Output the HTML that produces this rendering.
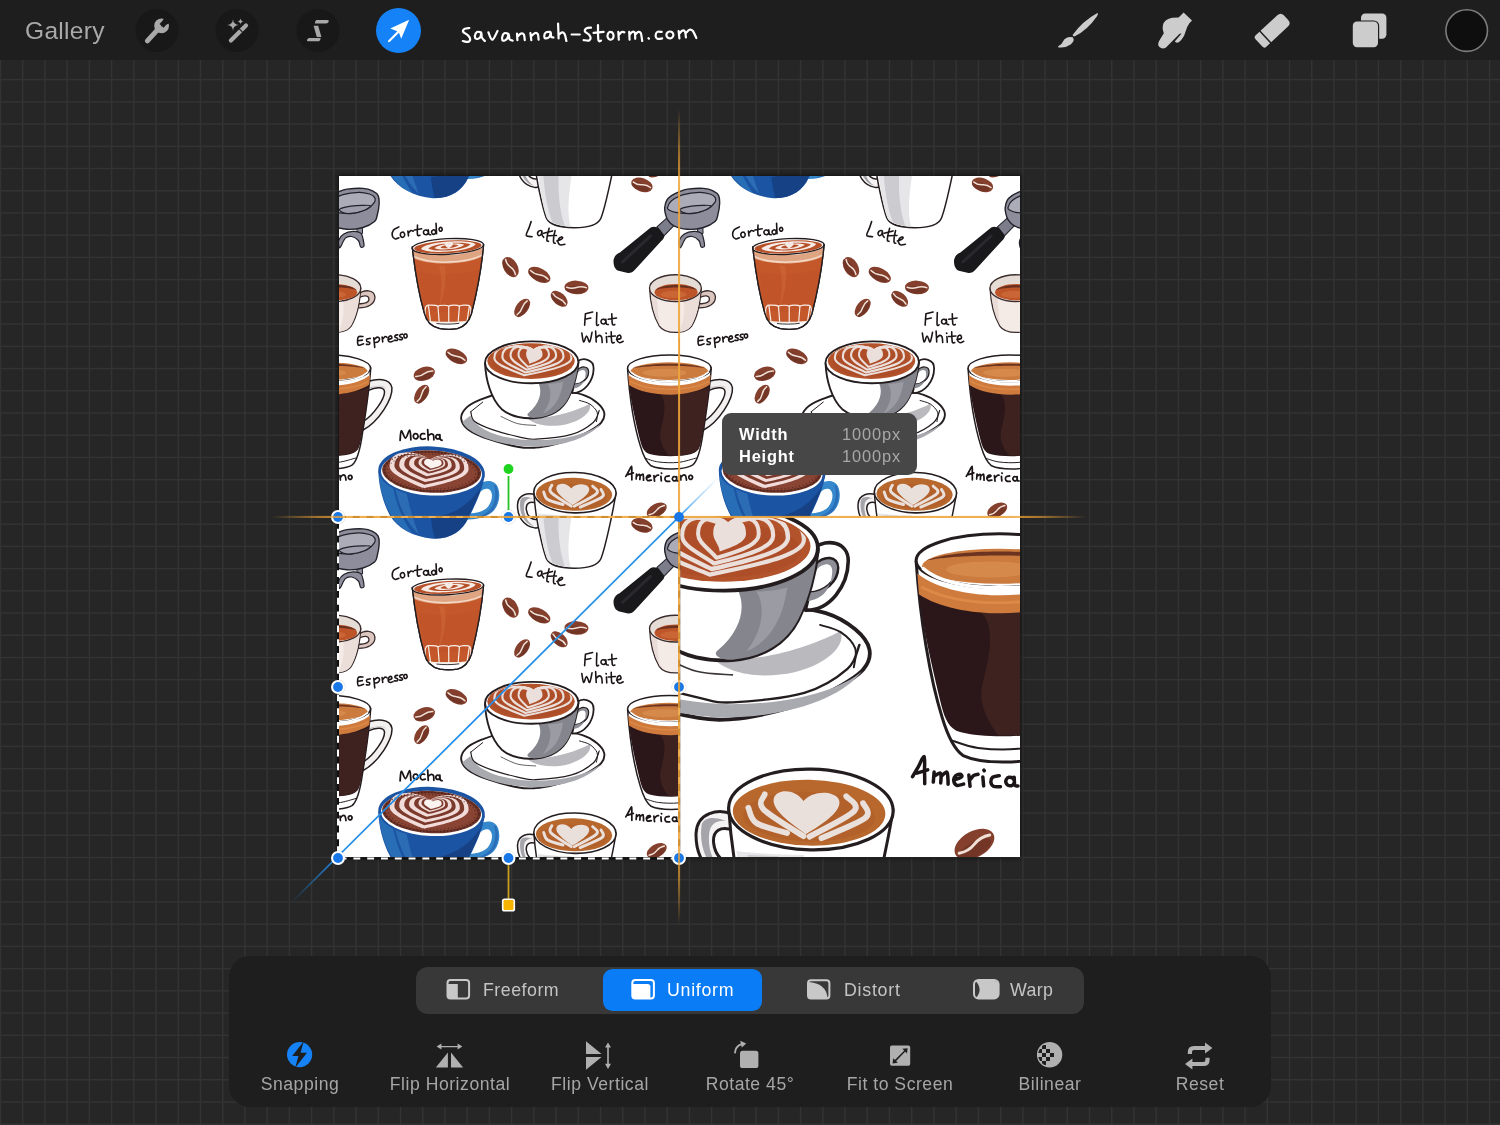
<!DOCTYPE html>
<html><head><meta charset="utf-8"><title>Procreate - Transform</title>
<style>
*{box-sizing:border-box;margin:0;padding:0}
html,body{width:1500px;height:1125px;overflow:hidden;background:#262626;font-family:"Liberation Sans",sans-serif}
#root{position:relative;width:1500px;height:1125px;overflow:hidden;background:#262626}
#grid,#stage{position:absolute;left:0;top:0;width:1500px;height:1125px}
#topbar{position:absolute;left:0;top:0;width:1500px;height:60px;background:#1e1e1e}
#topbar .gal{will-change:transform;position:absolute;left:25.3px;top:16px;font-size:24.5px;line-height:30px;color:#a9a9a9;letter-spacing:0.32px}
#topbar svg{position:absolute;left:0;top:0}
#panel{position:absolute;left:229px;top:956px;width:1042px;height:151px;border-radius:21px;background:#1e1e1e}
#seg{position:absolute;left:187px;top:11px;width:668px;height:47px;border-radius:12px;background:#383838}
#seg .on{position:absolute;left:187px;top:2.4px;width:159px;height:41.5px;border-radius:9.5px;background:#0a7cf6}
#seg span{will-change:transform;position:absolute;top:11px;font-size:17.8px;line-height:24px;color:#c4c4c4;letter-spacing:0.35px;white-space:nowrap}
#seg span.w{color:#fff}
.lbl{will-change:transform;position:absolute;top:116px;width:150px;text-align:center;font-size:17.6px;line-height:24px;color:#a6a6a6;letter-spacing:0.53px;white-space:nowrap}
#picons{position:absolute;left:-229px;top:-956px}
#tip{position:absolute;left:722px;top:413px;width:195px;height:62px;border-radius:9px;background:#474747}
#tip b,#tip i{will-change:transform;position:absolute;font-size:16.4px;line-height:20px;font-style:normal;white-space:nowrap}
#tip b{left:17px;color:#fff;letter-spacing:0.8px}
#tip i{right:16.2px;color:#a8a8a8;letter-spacing:0.9px}
</style></head><body><div id="root">
<svg id="grid" width="1500" height="1125" viewBox="0 0 1500 1125"><g fill="#333333"><rect x="-0.28" y="60" width="1.5" height="1065"/><rect x="21.95" y="60" width="1.5" height="1065"/><rect x="44.17" y="60" width="1.5" height="1065"/><rect x="66.40" y="60" width="1.5" height="1065"/><rect x="88.62" y="60" width="1.5" height="1065"/><rect x="110.84" y="60" width="1.5" height="1065"/><rect x="133.07" y="60" width="1.5" height="1065"/><rect x="155.29" y="60" width="1.5" height="1065"/><rect x="177.52" y="60" width="1.5" height="1065"/><rect x="199.74" y="60" width="1.5" height="1065"/><rect x="221.97" y="60" width="1.5" height="1065"/><rect x="244.19" y="60" width="1.5" height="1065"/><rect x="266.42" y="60" width="1.5" height="1065"/><rect x="288.64" y="60" width="1.5" height="1065"/><rect x="310.87" y="60" width="1.5" height="1065"/><rect x="333.10" y="60" width="1.5" height="1065"/><rect x="355.32" y="60" width="1.5" height="1065"/><rect x="377.55" y="60" width="1.5" height="1065"/><rect x="399.77" y="60" width="1.5" height="1065"/><rect x="422.00" y="60" width="1.5" height="1065"/><rect x="444.22" y="60" width="1.5" height="1065"/><rect x="466.45" y="60" width="1.5" height="1065"/><rect x="488.67" y="60" width="1.5" height="1065"/><rect x="510.90" y="60" width="1.5" height="1065"/><rect x="533.12" y="60" width="1.5" height="1065"/><rect x="555.35" y="60" width="1.5" height="1065"/><rect x="577.57" y="60" width="1.5" height="1065"/><rect x="599.80" y="60" width="1.5" height="1065"/><rect x="622.02" y="60" width="1.5" height="1065"/><rect x="644.25" y="60" width="1.5" height="1065"/><rect x="666.47" y="60" width="1.5" height="1065"/><rect x="688.70" y="60" width="1.5" height="1065"/><rect x="710.92" y="60" width="1.5" height="1065"/><rect x="733.15" y="60" width="1.5" height="1065"/><rect x="755.37" y="60" width="1.5" height="1065"/><rect x="777.60" y="60" width="1.5" height="1065"/><rect x="799.82" y="60" width="1.5" height="1065"/><rect x="822.05" y="60" width="1.5" height="1065"/><rect x="844.27" y="60" width="1.5" height="1065"/><rect x="866.50" y="60" width="1.5" height="1065"/><rect x="888.72" y="60" width="1.5" height="1065"/><rect x="910.95" y="60" width="1.5" height="1065"/><rect x="933.17" y="60" width="1.5" height="1065"/><rect x="955.40" y="60" width="1.5" height="1065"/><rect x="977.62" y="60" width="1.5" height="1065"/><rect x="999.85" y="60" width="1.5" height="1065"/><rect x="1022.07" y="60" width="1.5" height="1065"/><rect x="1044.30" y="60" width="1.5" height="1065"/><rect x="1066.52" y="60" width="1.5" height="1065"/><rect x="1088.75" y="60" width="1.5" height="1065"/><rect x="1110.97" y="60" width="1.5" height="1065"/><rect x="1133.20" y="60" width="1.5" height="1065"/><rect x="1155.42" y="60" width="1.5" height="1065"/><rect x="1177.65" y="60" width="1.5" height="1065"/><rect x="1199.87" y="60" width="1.5" height="1065"/><rect x="1222.10" y="60" width="1.5" height="1065"/><rect x="1244.32" y="60" width="1.5" height="1065"/><rect x="1266.54" y="60" width="1.5" height="1065"/><rect x="1288.77" y="60" width="1.5" height="1065"/><rect x="1310.99" y="60" width="1.5" height="1065"/><rect x="1333.22" y="60" width="1.5" height="1065"/><rect x="1355.44" y="60" width="1.5" height="1065"/><rect x="1377.67" y="60" width="1.5" height="1065"/><rect x="1399.89" y="60" width="1.5" height="1065"/><rect x="1422.12" y="60" width="1.5" height="1065"/><rect x="1444.34" y="60" width="1.5" height="1065"/><rect x="1466.57" y="60" width="1.5" height="1065"/><rect x="1488.79" y="60" width="1.5" height="1065"/><rect x="0" y="78.88" width="1500" height="1.5"/><rect x="0" y="101.10" width="1500" height="1.5"/><rect x="0" y="123.32" width="1500" height="1.5"/><rect x="0" y="145.55" width="1500" height="1.5"/><rect x="0" y="167.77" width="1500" height="1.5"/><rect x="0" y="190.00" width="1500" height="1.5"/><rect x="0" y="212.22" width="1500" height="1.5"/><rect x="0" y="234.45" width="1500" height="1.5"/><rect x="0" y="256.67" width="1500" height="1.5"/><rect x="0" y="278.90" width="1500" height="1.5"/><rect x="0" y="301.12" width="1500" height="1.5"/><rect x="0" y="323.35" width="1500" height="1.5"/><rect x="0" y="345.58" width="1500" height="1.5"/><rect x="0" y="367.80" width="1500" height="1.5"/><rect x="0" y="390.03" width="1500" height="1.5"/><rect x="0" y="412.25" width="1500" height="1.5"/><rect x="0" y="434.48" width="1500" height="1.5"/><rect x="0" y="456.70" width="1500" height="1.5"/><rect x="0" y="478.93" width="1500" height="1.5"/><rect x="0" y="501.15" width="1500" height="1.5"/><rect x="0" y="523.38" width="1500" height="1.5"/><rect x="0" y="545.60" width="1500" height="1.5"/><rect x="0" y="567.83" width="1500" height="1.5"/><rect x="0" y="590.05" width="1500" height="1.5"/><rect x="0" y="612.28" width="1500" height="1.5"/><rect x="0" y="634.50" width="1500" height="1.5"/><rect x="0" y="656.73" width="1500" height="1.5"/><rect x="0" y="678.95" width="1500" height="1.5"/><rect x="0" y="701.18" width="1500" height="1.5"/><rect x="0" y="723.40" width="1500" height="1.5"/><rect x="0" y="745.63" width="1500" height="1.5"/><rect x="0" y="767.85" width="1500" height="1.5"/><rect x="0" y="790.08" width="1500" height="1.5"/><rect x="0" y="812.30" width="1500" height="1.5"/><rect x="0" y="834.53" width="1500" height="1.5"/><rect x="0" y="856.75" width="1500" height="1.5"/><rect x="0" y="878.98" width="1500" height="1.5"/><rect x="0" y="901.20" width="1500" height="1.5"/><rect x="0" y="923.43" width="1500" height="1.5"/><rect x="0" y="945.65" width="1500" height="1.5"/><rect x="0" y="967.88" width="1500" height="1.5"/><rect x="0" y="990.10" width="1500" height="1.5"/><rect x="0" y="1012.33" width="1500" height="1.5"/><rect x="0" y="1034.55" width="1500" height="1.5"/><rect x="0" y="1056.78" width="1500" height="1.5"/><rect x="0" y="1079.00" width="1500" height="1.5"/><rect x="0" y="1101.23" width="1500" height="1.5"/><rect x="0" y="1123.45" width="1500" height="1.5"/></g></svg><svg id="stage" width="1500" height="1125" viewBox="0 0 1500 1125">
<defs><g id="art"><path d="M122.4 243.2 C122.0 239.6 124.0 235.6 127.2 232.4 C130.4 229.2 135.3 226.6 141.6 224.0 C147.9 221.4 156.4 218.6 165.0 217.0 C173.6 215.4 183.5 214.8 193.0 214.5 C202.5 214.2 213.5 214.8 222.0 215.5 C230.5 216.2 237.7 217.0 243.8 218.9 C249.9 220.8 254.9 224.0 258.5 227.0 C262.1 230.0 264.9 233.7 265.6 237.0 C266.3 240.3 265.2 243.8 262.6 247.0 C260.0 250.2 254.9 253.2 250.0 256.0 C245.1 258.8 238.8 261.4 233.0 263.6 C227.2 265.8 221.0 267.6 215.0 269.0 C209.0 270.4 202.8 271.6 197.0 272.0 C191.2 272.4 187.8 272.8 180.0 271.4 C172.2 270.0 158.4 266.5 150.0 263.6 C141.6 260.7 134.2 257.4 129.6 254.0 C125.0 250.6 122.8 246.8 122.4 243.2Z" fill="#fff" stroke="#241d20" stroke-width="1.9" stroke-linecap="round" stroke-linejoin="round"/><path d="M123.5 246 C128 258 160 270 193 271.2 C226 271 252 261 262 248 C250 258 226 264.5 196 264.5 C164 264 138 255 131.5 240 Z" fill="#a9a9b0"/><path d="M132.0 236.0 C132.6 237.6 132.0 242.6 135.6 245.6 C139.2 248.6 146.2 251.4 153.6 254.0 C161.0 256.6 172.8 259.6 180.0 261.2 C187.2 262.8 188.2 264.0 197.0 263.6 C205.8 263.2 223.4 261.6 233.0 258.8 C242.6 256.0 250.0 250.8 254.6 246.8 C259.2 242.8 259.6 236.8 260.6 234.8" fill="none" stroke="#241d20" stroke-width="1.2" stroke-linecap="round" stroke-linejoin="round"/><path d="M144.0 226.4 L132.0 236.0" fill="none" stroke="#241d20" stroke-width="1.0" stroke-linecap="round" stroke-linejoin="round"/><path d="M186 240 C205 246 236 236 251 228 C254 234 246 244 228 248.5 C212 252 194 250 186 240Z" fill="#b9b9be"/><path d="M240.9 224.8 C242.6 225.4 248.3 226.5 251.2 228.4 C254.1 230.3 257.4 233.6 258.5 236.5 C259.6 239.4 257.9 244.4 257.8 246.0" fill="none" stroke="#241d20" stroke-width="1.0" stroke-linecap="round" stroke-linejoin="round"/><path d="M162.2 240.8 C165.0 242.0 173.2 246.5 179.0 248.0 C184.8 249.5 194.0 249.5 197.0 249.8" fill="none" stroke="#3a3538" stroke-width="0.8" stroke-linecap="round" stroke-linejoin="round"/><path d="M238.5 186 C243.8 181.5 255.3 183 255 193 C254.8 205 246 217.8 233.5 217.4 L235.5 208.8 C243 208.6 249.7 203 249.7 196.2 C249.7 190.5 243 190 238.6 195 Z" fill="#fff" stroke="#241d20" stroke-width="1.8" stroke-linecap="round" stroke-linejoin="round"/><path d="M238.8 195 C243 190.4 249.5 191 249.4 196.2 C249 203 243 208.4 235.7 208.6 L234.6 212.8 C242 212 246.5 207 247 198 C247 193 242 193.5 238.8 197.5Z" fill="#8d8e96"/><path d="M146.3 188 C147 204 152 223 163 233.5 C172 241 185 243.2 197 242.4 C212 241.2 224 234 230 222 C235.5 211 238.5 199 239.8 187 Z" fill="#fff" stroke="#241d20" stroke-width="1.9" stroke-linecap="round" stroke-linejoin="round"/><path d="M199.8 207.5 C204 216 201 228 190 237.2 C186 240 192 242.6 197 242.2 C212 241 224 234 230 222 C235.5 211 238.3 199 239.4 189 C232 200 216 206 199.8 207.5Z" fill="#84858d"/><path d="M209 208 C214 216 212 228 204 238 C214 234 222 224 224.5 206 C219 207.5 214 208 209 208Z" fill="#9a9ba3"/><ellipse cx="193.0" cy="186.6" rx="46.8" ry="21.0" fill="#fff" stroke="#241d20" stroke-width="1.9" transform="rotate(-0.5 193.0 186.6)"/><ellipse cx="192.3" cy="185.4" rx="43.8" ry="17.8" fill="#b3532b"/><ellipse cx="192.3" cy="187.4" rx="39.0" ry="13.6" fill="#a84a25" opacity=".45"/><clipPath id="fwc"><ellipse cx="192.3" cy="185.4" rx="43" ry="17.2"/></clipPath><g clip-path="url(#fwc)"><path d="M185.6 199.6 C170.3 193.2 155.6 188.6 155.6 182.2 C155.6 171.8 167.2 170.3 174.9 170.6 C184.5 171.2 191.9 173.5 194.2 176.4 C196.5 173.5 203.8 171.2 213.5 170.6 C221.2 170.3 232.8 171.8 232.8 182.2 C232.8 188.6 218.1 193.2 185.6 199.6Z" fill="none" stroke="#ebdfdb" stroke-width="2.1" stroke-linecap="round" stroke-linejoin="round"/><path d="M186.6 196.8 C175.2 191.0 163.6 186.8 163.6 181.0 C163.6 171.5 172.8 170.1 178.9 170.4 C186.5 170.9 192.4 173.0 194.2 175.7 C196.0 173.0 201.8 170.9 209.5 170.4 C215.6 170.1 224.8 171.5 224.8 181.0 C224.8 186.8 213.2 191.0 186.6 196.8Z" fill="none" stroke="#ebdfdb" stroke-width="2.2" stroke-linecap="round" stroke-linejoin="round"/><path d="M187.8 194.0 C180.5 188.9 171.8 185.2 171.8 180.1 C171.8 171.7 178.6 170.6 183.2 170.8 C188.9 171.3 193.2 173.1 194.6 175.4 C196.0 173.1 200.3 171.3 206.0 170.8 C210.6 170.6 217.4 171.7 217.4 180.1 C217.4 185.2 208.7 188.9 187.8 194.0Z" fill="none" stroke="#ebdfdb" stroke-width="2.1" stroke-linecap="round" stroke-linejoin="round"/><path d="M189.0 191.2 C185.6 186.8 179.8 183.7 179.8 179.3 C179.8 172.2 184.4 171.2 187.4 171.4 C191.2 171.8 194.1 173.4 195.0 175.4 C195.9 173.4 198.8 171.8 202.6 171.4 C205.6 171.2 210.2 172.2 210.2 179.3 C210.2 183.7 204.4 186.8 189.0 191.2Z" fill="none" stroke="#ebdfdb" stroke-width="2.0" stroke-linecap="round" stroke-linejoin="round"/><path d="M190.6 188.0 C190.5 184.7 187.4 182.3 187.4 179.0 C187.4 173.6 189.9 172.8 191.5 173.0 C193.5 173.3 195.1 174.5 195.6 176.0 C196.1 174.5 197.7 173.3 199.7 173.0 C201.3 172.8 203.8 173.6 203.8 179.0 C203.8 182.3 200.7 184.7 190.6 188.0Z" fill="#ebdfdb"/></g><path d="M370.6 205.6 C378 203.4 392 201.6 394 212 C395 223 381 246 364.8 254.6 L365.8 245.4 C376 239 386.6 223 386.6 216.2 C386.4 209.6 376 212.4 370 215 Z" fill="#f3f0f0" stroke="#241d20" stroke-width="1.5" stroke-linecap="round" stroke-linejoin="round"/><path d="M372 213 C378 210 387.5 208.8 388.6 215 C388 208 378 209.5 371 212.2Z" fill="#b9b4b6"/><path d="M289 193 C291 222 296 252 302 271 C305 281 308 287 312.5 290.2 C322 294.6 345 294.6 354 289.6 C358.6 286 362 276 364.6 257 C368 236 371.4 212 372.8 192 Z" fill="#fff" stroke="#241d20" stroke-width="1.5" stroke-linecap="round" stroke-linejoin="round"/><path d="M290.2 208 C300 216 320 218.4 334 218 C350 217.6 364 214 371.4 207.6 C370 226 366 250 362.6 266 C361 274 358 277.4 352 278.6 C340 281.4 322 281.2 311 278.4 C305.6 277 303.4 272 301.6 265 C297 246 292.4 226 290.2 208Z" fill="#2b1719"/><path d="M318 216 C330 222 326 240 322 255 C320 266 326 274 330 280 C344 280.6 356 278 360 274 C364 262 368 236 370.6 212 C356 218 336 219 318 216Z" fill="#3d2220"/><path d="M289.6 199 C300 207.4 318 210 332 210 C350 209.6 364 206 372.2 199 L371.4 208.8 C362 215.6 346 218.8 332 219 C316 219 300 216 290.4 209.4Z" fill="#cf7b3e"/><path d="M292 206 C304 212 320 214 334 213.6 C350 213 362 210.4 370 206" fill="none" stroke="#dd8a48" stroke-width="1.4" stroke-linecap="round" stroke-linejoin="round"/><ellipse cx="330.8" cy="192.6" rx="41.8" ry="13.4" fill="#fff" stroke="#241d20" stroke-width="1.5"/><ellipse cx="330.8" cy="195.4" rx="38.8" ry="8.8" fill="#cb7b3e"/><path d="M294 192.6 C308 186.6 352 186.4 367.6 192.6 C352 189.2 310 189.2 294 192.6Z" fill="#6b3320"/><ellipse cx="326.0" cy="197.0" rx="22.0" ry="4.0" fill="#dc9456" opacity=".6"/><path d="M292.6 196.6 C302 205 322 206.4 333 206.2 C348 206 362 203.4 369.6 196.6" fill="none" stroke="#fff" stroke-width="1.7" stroke-linecap="round" stroke-linejoin="round"/><path d="M306.6 282.6 C308.8 283.2 314.4 285.7 320.0 286.4 C325.6 287.1 333.7 287.5 340.0 286.8 C346.3 286.1 355.0 283.1 358.0 282.4" fill="none" stroke="#241d20" stroke-width="1.0" stroke-linecap="round" stroke-linejoin="round"/><path d="M197 319.6 C190 316.6 179.4 318.6 178.8 329 C178.4 340 184 350.6 196 352.4 C199.6 352.8 201.6 351 202 348.6 L199.6 343.6 C193.6 345.6 188.4 341 187.6 334 C187 327.6 191 325.4 197.6 327.6Z" fill="#f4f2f2" stroke="#241d20" stroke-width="1.5" stroke-linecap="round" stroke-linejoin="round"/><path d="M181.6 325 C180 336 184.6 348 195 350.6 C187.4 346 184.4 337 185.4 329 C186 324 190 322.4 194 323 C188 320.6 182.6 320.8 181.6 325Z" fill="#a4a4aa"/><path d="M195.2 317 C196 330 198 345 201 358 C203.4 369 205.4 377 207.6 383 C210.6 389.6 222 392.8 235.4 392.8 C248.6 392.8 259.6 389.6 262.4 383 C266 374 269.4 358 272.4 344 C274.6 333 276.6 324 277.4 317 Z" fill="#fff" stroke="#241d20" stroke-width="1.5" stroke-linecap="round" stroke-linejoin="round"/><path d="M199 338 C202 360 205 376 209 384.6 C214 389.6 224 391.6 232 391.6 C228 378 230 360 233 340 C221 340 208 339 199 338Z" fill="#e6e6e8"/><path d="M204.6 340 C206 360 209.6 378 214 387.6 C218 389.6 223 390.6 226 390.8 C221 376 219 356 220 340.6Z" fill="#cbcbd0"/><ellipse cx="236.3" cy="317.2" rx="41.2" ry="20.2" fill="#fff" stroke="#241d20" stroke-width="1.6" transform="rotate(1.2 236.3 317.2)"/><ellipse cx="235.4" cy="318.8" rx="38.2" ry="16.5" fill="#b8672d" transform="rotate(1.2 235.4 318.8)"/><ellipse cx="235.4" cy="320.8" rx="33.0" ry="12.4" fill="#ad5c27" transform="rotate(1.2 235.4 320.8)" opacity=".5"/><path d="M233.8 329.6 C226 324 216 317 217.8 311.4 C219.6 306.6 228.6 307 232.6 313 C236.6 308 246.6 307.4 250 311.6 C253.4 317.4 242 324.6 233.8 329.6Z" fill="#e9dfdb"/><path d="M213.2 309.6 C213.1 310.8 209.2 313.5 212.4 317.0 C215.6 320.5 229.2 328.3 232.6 330.6" fill="none" stroke="#e9dfdb" stroke-width="2.9" stroke-linecap="round" stroke-linejoin="round"/><path d="M205.0 316.4 C205.7 317.7 205.8 321.9 209.0 324.0 C212.2 326.1 221.8 328.2 224.4 329.0" fill="none" stroke="#e9dfdb" stroke-width="2.9" stroke-linecap="round" stroke-linejoin="round"/><path d="M254.0 310.6 C254.7 311.8 261.1 314.6 258.0 318.0 C254.9 321.4 239.3 328.7 235.6 330.8" fill="none" stroke="#e9dfdb" stroke-width="2.9" stroke-linecap="round" stroke-linejoin="round"/><path d="M262.4 314.0 C262.6 315.2 267.1 318.5 263.6 321.4 C260.1 324.3 245.3 329.9 241.6 331.6" fill="none" stroke="#e9dfdb" stroke-width="2.9" stroke-linecap="round" stroke-linejoin="round"/><path d="M141 308.6 C146 304.6 155 303.8 158.8 311 C162.4 319 160.4 331 153 337 C146 342.6 134 345 124 343.6 L127 337.6 C136 338.6 145.4 336 149.4 331 C153.6 325.6 154.4 318 151.4 314.6 C148.6 312 144.6 313.4 141.6 316.4Z" fill="#3688cc"/><path d="M157 309.6 C161 318 159.6 330 152.4 336.6 C148 340.6 140 343 132 343.4 C142 341.6 150.6 337 154 330 C157 323 157.6 315 155 310Z" fill="#2a6db8"/><path d="M39.4 295 C39.6 310 44 327 51 340 C58 352 74 361.6 94 363.2 C112 364 124 355 129.4 343 C137 329 143.6 314 146 300 Z" fill="#1b54a2"/><path d="M40 300 C41 314 46 330 53 341 C58 349 66 355 74 358.4 C64 346 56 326 53 306Z" fill="#3688cc" opacity=".5"/><path d="M56 312 C60 330 68 348 80 359 C74 344 69 326 67 314Z" fill="#4a9bd8" opacity=".35"/><path d="M96 363 C112 363 123 355 128.6 343.4 C134 333 139 322 142.6 311 C130 330 114 340 92 342 C93 350 94 357 96 363Z" fill="#153c7e" opacity=".8"/><g transform="rotate(2.6 92.7 296.6)"><ellipse cx="92.7" cy="296.4" rx="53.4" ry="25.6" fill="#1b54a2"/><ellipse cx="92.7" cy="297.4" rx="50.6" ry="22.6" fill="#fff"/><ellipse cx="92.7" cy="296.0" rx="49.6" ry="21.2" fill="#6e3226"/><ellipse cx="92.7" cy="296.0" rx="46.0" ry="18.6" fill="#8a4433"/><path d="M85.5 313.0 C65.4 305.3 50.4 299.7 50.4 292.0 C50.4 279.4 62.3 277.6 70.2 278.0 C80.1 278.7 87.6 281.5 90.0 285.0 C92.4 281.5 99.9 278.7 109.8 278.0 C117.7 277.6 129.6 279.4 129.6 292.0 C129.6 299.7 114.6 305.3 85.5 313.0Z" fill="#f1dcda"/><path d="M86.0 309.6 C68.5 303.0 55.2 298.1 55.2 291.5 C55.2 280.6 65.7 279.1 72.7 279.4 C81.5 280.0 88.1 282.4 90.2 285.4 C92.3 282.4 99.0 280.0 107.7 279.4 C114.7 279.1 125.2 280.6 125.2 291.5 C125.2 298.1 111.9 303.0 86.0 309.6Z" fill="#7b3a2c"/><path d="M86.6 306.8 C71.6 300.9 60.0 296.7 60.0 290.8 C60.0 281.3 69.1 279.9 75.2 280.2 C82.8 280.7 88.6 282.9 90.4 285.5 C92.2 282.9 98.0 280.7 105.6 280.2 C111.7 279.9 120.8 281.3 120.8 290.8 C120.8 296.7 109.2 300.9 86.6 306.8Z" fill="#f1dcda"/><path d="M87.4 303.8 C74.8 298.8 65.0 295.1 65.0 290.1 C65.0 281.9 72.7 280.8 77.9 281.0 C84.3 281.5 89.3 283.3 90.8 285.6 C92.3 283.3 97.2 281.5 103.7 281.0 C108.9 280.8 116.6 281.9 116.6 290.1 C116.6 295.1 106.8 298.8 87.4 303.8Z" fill="#7b3a2c"/><path d="M88.2 301.0 C77.9 296.7 69.8 293.6 69.8 289.4 C69.8 282.4 76.2 281.4 80.5 281.6 C85.9 282.0 89.9 283.5 91.2 285.5 C92.5 283.5 96.5 282.0 101.9 281.6 C106.2 281.4 112.6 282.4 112.6 289.4 C112.6 293.6 104.5 296.7 88.2 301.0Z" fill="#f1dcda"/><path d="M89.2 298.2 C81.3 294.7 74.8 292.1 74.8 288.6 C74.8 282.8 79.9 282.0 83.3 282.2 C87.5 282.5 90.8 283.8 91.8 285.4 C92.8 283.8 96.0 282.5 100.3 282.2 C103.7 282.0 108.8 282.8 108.8 288.6 C108.8 292.1 102.3 294.7 89.2 298.2Z" fill="#7b3a2c"/><path d="M90.2 296.0 C84.3 293.1 79.2 290.9 79.2 288.0 C79.2 283.1 83.2 282.5 85.9 282.6 C89.2 282.9 91.8 283.9 92.6 285.3 C93.4 283.9 95.9 282.9 99.3 282.6 C102.0 282.5 106.0 283.1 106.0 288.0 C106.0 290.9 100.9 293.1 90.2 296.0Z" fill="#f1dcda"/><path d="M91.0 294.6 C86.4 292.0 82.2 290.2 82.2 287.6 C82.2 283.5 85.5 282.9 87.7 283.0 C90.5 283.2 92.5 284.2 93.2 285.3 C93.9 284.2 96.0 283.2 98.7 283.0 C100.9 282.9 104.2 283.5 104.2 287.6 C104.2 290.2 100.0 292.0 91.0 294.6Z" fill="#7b3a2c"/><path d="M91.6 293.0 C88.1 290.9 84.8 289.4 84.8 287.4 C84.8 284.0 87.4 283.5 89.2 283.6 C91.4 283.8 93.1 284.5 93.6 285.5 C94.1 284.5 95.8 283.8 98.0 283.6 C99.8 283.5 102.4 284.0 102.4 287.4 C102.4 289.4 99.1 290.9 91.6 293.0Z" fill="#fbf3f0"/><ellipse cx="92.7" cy="296.0" rx="47.4" ry="19.6" fill="none" stroke="#3a1d18" stroke-width="1.3" stroke-dasharray="1.2 2.2" opacity=".85"/><ellipse cx="92.7" cy="296.0" rx="44.2" ry="17.2" fill="none" stroke="#3a1d18" stroke-width="1.1" stroke-dasharray="1 2.6" opacity=".7"/></g><path d="M73.4 71 C76 95 80 118 85.4 137 C87 144 91 150.6 101 152.8 C107 153.8 113 153.8 118.6 152.8 C127 150.8 130.4 145 132.6 138 C138 117 142.6 94 144.8 68.6 Z" fill="#fff" stroke="#241d20" stroke-width="1.4" stroke-linecap="round" stroke-linejoin="round"/><clipPath id="ccl"><path d="M73.4 71 C76 95 80 118 85.4 137 C87 144 91 150.6 101 152.8 C107 153.8 113 153.8 118.6 152.8 C127 150.8 130.4 145 132.6 138 C138 117 142.6 94 144.8 68.6 Z"/></clipPath><g clip-path="url(#ccl)"><path d="M74.6 80 C90 88 128 87 143.8 78 C142 98 139.6 116 134.6 135 C133 141.6 131 144.4 128.6 146 L90.6 146 C88 144.4 86 141 84.6 135.6 C80 118 76.6 98 74.6 80Z" fill="#c4582b"/><path d="M80 96 C94 100 124 100 140.4 93 C139 106 137 120 134 133 C120 137 98 137 86.4 133.4 C83 120 81 108 80 96Z" fill="#bf5227" opacity=".55"/><path d="M100 90 C104 104 103 120 99 134 C106 120 108 104 106 90Z" fill="#d06a38" opacity=".5"/><path d="M73.8 73 C90 82 128 81 144.4 71 L143.6 80.4 C128 89.4 90 90 74.8 82.4Z" fill="#dfa583"/><path d="M75.2 80.8 C92 88.6 126 88 143.4 79.2" fill="none" stroke="#f3d9c6" stroke-width="1.5" stroke-linecap="round" stroke-linejoin="round"/></g><ellipse cx="109.0" cy="70.6" rx="35.8" ry="7.8" fill="#fff" stroke="#241d20" stroke-width="1.3" transform="rotate(-3.0 109.0 70.6)"/><ellipse cx="109.0" cy="71.0" rx="33.8" ry="6.4" fill="#b7512a" transform="rotate(-3.0 109.0 71.0)"/><g transform="rotate(-3 109 71)"><path d="M82 71.6 C86 64.4 130 63.6 137 69.6 C133 76.6 92 78.2 82 71.6Z" fill="#f6ebe5"/><path d="M89.6 71.8 C93 66.4 126 65.8 131.6 69.8 C127 75 98 76.2 89.6 71.8Z" fill="#b7512a"/><path d="M95.6 71.6 C98.6 67.4 121 66.8 125.6 69.8 C121 73.8 102 74.8 95.6 71.6Z" fill="#f6ebe5"/><path d="M101.6 71.2 C104 68.6 116 68.2 119.6 70 C116 72.6 106 73.2 101.6 71.2Z" fill="#b7512a"/><path d="M109.6 72.4 C105.6 70 105 66.6 107.6 66 C109 66 109.6 67 109.8 67.8 C110.4 66.4 112.6 65.8 113.8 66.8 C115.6 68.6 113 71 109.6 72.4Z" fill="#f6ebe5"/></g><path d="M86.6 141 C85.6 133 86.6 129.6 89.4 129.4 C93 129.2 97.6 129.2 99.1 130.6 C100.6 129.2 108 129 109.9 130.4 C111.6 129 119 129 120.6 130.4 C122 129.2 127 129 129.8 129.6 C132.4 130 132.6 133 131.6 140" fill="none" stroke="#f8efe9" stroke-width="1.2" stroke-linecap="round" stroke-linejoin="round"/><path d="M89.6 130.4 L91.6 145.6" fill="none" stroke="#f8efe9" stroke-width="1.2" stroke-linecap="round" stroke-linejoin="round"/><path d="M99.1 130.4 L100.3 145.6" fill="none" stroke="#f8efe9" stroke-width="1.2" stroke-linecap="round" stroke-linejoin="round"/><path d="M109.9 130.4 L109.9 145.6" fill="none" stroke="#f8efe9" stroke-width="1.2" stroke-linecap="round" stroke-linejoin="round"/><path d="M120.6 130.4 L119.4 145.6" fill="none" stroke="#f8efe9" stroke-width="1.2" stroke-linecap="round" stroke-linejoin="round"/><path d="M130.6 130.4 L128.2 145.6" fill="none" stroke="#f8efe9" stroke-width="1.2" stroke-linecap="round" stroke-linejoin="round"/><path d="M88.8 145.4 C100 147.6 120 147.6 130.6 145.2" fill="none" stroke="#f8efe9" stroke-width="1.5" stroke-linecap="round" stroke-linejoin="round"/><path d="M98 147.8 C104 148.6 114 148.6 120 147.6" fill="none" stroke="#241d20" stroke-width="0.9" stroke-linecap="round" stroke-linejoin="round"/><path d="M73.4 71 C76 95 80 118 85.4 137 C87 144 91 150.6 101 152.8 C107 153.8 113 153.8 118.6 152.8 C127 150.8 130.4 145 132.6 138 C138 117 142.6 94 144.8 68.6" fill="none" stroke="#241d20" stroke-width="1.4" stroke-linecap="round" stroke-linejoin="round"/><path d="M360.6 118.4 C366 113.4 376.2 113.4 377 121 C377.4 128.4 369.4 132.4 359.6 132 L360.2 127.8 C366 128.4 371 127 371 123.4 C371 119.4 366 119 361 122Z" fill="#dcc7c0" stroke="#3a2c2c" stroke-width="1.3" stroke-linecap="round" stroke-linejoin="round"/><path d="M311 112 C311.6 125 314.6 140 320.6 150 C324 155 331 156.6 337 156.6 C344 156.6 350 154.6 353.4 150 C359 141 362 125 362.8 112Z" fill="#f4ebe7" stroke="#3a2c2c" stroke-width="1.3" stroke-linecap="round" stroke-linejoin="round"/><path d="M345 126 C346.6 138 345 148 340 156.2 C347 156 351.6 153 354 148 C358.6 139 361 127 362 116 C358 121 352 124.6 345 126Z" fill="#ebded9"/><path d="M312.4 118 C313.6 130 316.6 142 321.6 150 C319.6 140 318.6 128 318.6 121Z" fill="#e9dbd6"/><ellipse cx="336.9" cy="112.3" rx="25.9" ry="13.4" fill="#e6dcd6" stroke="#3a2c2c" stroke-width="1.3"/><path d="M312.6 113 C316 121 326 124.6 337 124.8 C348 124.8 358 121 361.4 113 C360 119 350 123.4 337 123.4 C324 123.4 314 119 312.6 113Z" fill="#fff"/><ellipse cx="337.6" cy="116.4" rx="21.6" ry="8.2" fill="#bd5528"/><path d="M316.6 114.6 C322 107.4 353 107.2 358.8 114.4 C350 110.8 325 110.8 316.6 114.6Z" fill="#6a3020"/><ellipse cx="335.0" cy="118.6" rx="13.0" ry="3.6" fill="#d06c3a" opacity=".7"/><path d="M359.4 52 L364.4 51.4 L364.6 57.6 L359.6 57.6Z" fill="#8d8d9b" stroke="#23222b" stroke-width="1.0" stroke-linecap="round" stroke-linejoin="round"/><path d="M341.0 70.8 C340.7 69.7 340.0 66.5 340.8 64.4 C341.6 62.3 343.4 59.5 345.8 58.0 C348.2 56.5 352.6 55.5 355.4 55.4 C358.2 55.3 361.2 55.8 362.8 57.2 C364.4 58.6 364.7 61.4 365.2 63.6 C365.7 65.8 366.4 69.0 366.0 70.2 C365.6 71.4 363.5 71.9 362.6 71.0 C361.7 70.1 361.9 66.3 360.4 64.6 C358.9 62.9 356.0 61.0 353.8 60.6 C351.6 60.2 349.3 60.4 347.4 62.2 C345.5 64.0 343.5 69.8 342.4 71.2 C341.3 72.6 341.3 71.9 341.0 70.8Z" fill="#8d8d9b" stroke="#23222b" stroke-width="1.2" stroke-linecap="round" stroke-linejoin="round"/><path d="M318.4 51 L329.6 41 L336.4 48.6 L325.2 60.2Z" fill="#7c7d8a" stroke="#23222b" stroke-width="1.1" stroke-linecap="round" stroke-linejoin="round"/><path d="M326.2 31.6 C326.4 29.4 327.1 26.4 328.2 24.4 C329.3 22.4 330.9 21.1 333.0 19.6 C335.1 18.1 338.3 16.7 341.0 15.6 C343.7 14.5 345.0 13.7 349.0 13.2 C353.0 12.7 360.7 12.1 365.0 12.4 C369.3 12.7 372.1 13.6 374.6 14.8 C377.1 16.0 379.1 17.5 380.2 19.6 C381.3 21.7 381.3 24.4 381.2 27.6 C381.1 30.8 380.2 35.8 379.4 38.8 C378.6 41.8 379.0 43.5 376.6 45.6 C374.2 47.7 369.6 50.3 365.0 51.6 C360.4 52.9 353.9 53.7 349.0 53.4 C344.1 53.1 338.7 51.6 335.4 50.0 C332.1 48.4 330.4 45.7 329.0 43.6 C327.6 41.5 327.3 39.4 326.8 37.4 C326.3 35.4 326.0 33.8 326.2 31.6Z" fill="#8d8d9b" stroke="#23222b" stroke-width="1.4" stroke-linecap="round" stroke-linejoin="round"/><path d="M329.0 31.6 C329.4 30.0 330.3 27.0 333.0 24.8 C335.7 22.6 340.3 20.0 345.0 18.6 C349.7 17.2 356.6 16.5 361.0 16.4 C365.4 16.3 368.8 17.2 371.4 18.0 C374.0 18.8 375.8 20.0 376.6 21.4 C377.4 22.8 377.7 24.4 376.4 26.4 C375.1 28.4 372.9 31.3 369.0 33.2 C365.1 35.1 358.3 37.1 353.0 37.6 C347.7 38.1 340.7 37.0 337.0 36.4 C333.3 35.8 332.1 35.0 330.8 34.2 C329.5 33.4 328.6 33.2 329.0 31.6Z" fill="#acacb9" stroke="#23222b" stroke-width="1.2" stroke-linecap="round" stroke-linejoin="round"/><path d="M341.8 33.2 C343.1 32.1 349.3 30.8 353.0 30.2 C356.7 29.6 360.7 29.4 364.0 29.4 C367.3 29.4 372.4 29.1 372.6 30.0 C372.8 30.9 368.3 33.6 365.0 34.8 C361.7 36.0 356.3 37.1 353.0 37.4 C349.7 37.7 346.9 37.3 345.0 36.6 C343.1 35.9 340.5 34.3 341.8 33.2Z" fill="#9d9dab" stroke="#23222b" stroke-width="1.1" stroke-linecap="round" stroke-linejoin="round"/><path d="M275 84 C276 80 278 78 281 76.8 L312.2 51.6 C315 50 318.6 51 320.6 52.8 L325.4 58.8 C326.4 61 325 63 323 64.8 L296.6 93.6 C294.6 96 292 97.4 289.4 97.2 L279.8 94.8 C276 93.4 274.6 88.6 275 84Z" fill="#19181b"/><path d="M284 86 L312 60" fill="none" stroke="#35343a" stroke-width="3" stroke-linecap="round" stroke-linejoin="round" opacity=".6"/><g transform="translate(171.8 91.2) rotate(59.0)"><ellipse rx="11.0" ry="7.0" fill="#843f2d"/><ellipse cx="-1.1" cy="2.4" rx="9.3" ry="3.9" fill="#5d2a1f" opacity=".45"/><path d="M-9.0 0.3 Q-4.4 2.0 0 0 T9.0 -0.3" fill="none" stroke="#efdfd4" stroke-width="1.5" stroke-linecap="round"/></g><g transform="translate(200.6 99.0) rotate(28.0)"><ellipse rx="12.0" ry="6.6" fill="#843f2d"/><ellipse cx="-1.2" cy="2.3" rx="10.2" ry="3.6" fill="#5d2a1f" opacity=".45"/><path d="M-9.8 0.3 Q-4.8 1.8 0 0 T9.8 -0.3" fill="none" stroke="#efdfd4" stroke-width="1.5" stroke-linecap="round"/></g><g transform="translate(237.8 111.6) rotate(3.0)"><ellipse rx="12.0" ry="6.8" fill="#843f2d"/><ellipse cx="-1.2" cy="2.4" rx="10.2" ry="3.7" fill="#5d2a1f" opacity=".45"/><path d="M-9.8 0.3 Q-4.8 1.9 0 0 T9.8 -0.3" fill="none" stroke="#efdfd4" stroke-width="1.5" stroke-linecap="round"/></g><g transform="translate(220.6 123.0) rotate(42.0)"><ellipse rx="10.0" ry="6.0" fill="#843f2d"/><ellipse cx="-1.0" cy="2.1" rx="8.5" ry="3.3" fill="#5d2a1f" opacity=".45"/><path d="M-8.2 0.3 Q-4.0 1.7 0 0 T8.2 -0.3" fill="none" stroke="#efdfd4" stroke-width="1.5" stroke-linecap="round"/></g><g transform="translate(183.4 132.0) rotate(-52.0)"><ellipse rx="10.5" ry="6.0" fill="#843f2d"/><ellipse cx="-1.1" cy="2.1" rx="8.9" ry="3.3" fill="#5d2a1f" opacity=".45"/><path d="M-8.6 0.3 Q-4.2 1.7 0 0 T8.6 -0.3" fill="none" stroke="#efdfd4" stroke-width="1.5" stroke-linecap="round"/></g><g transform="translate(117.6 180.6) rotate(27.0)"><ellipse rx="11.5" ry="6.6" fill="#843f2d"/><ellipse cx="-1.2" cy="2.3" rx="9.8" ry="3.6" fill="#5d2a1f" opacity=".45"/><path d="M-9.4 0.3 Q-4.6 1.8 0 0 T9.4 -0.3" fill="none" stroke="#efdfd4" stroke-width="1.5" stroke-linecap="round"/></g><g transform="translate(85.4 198.0) rotate(-16.0)"><ellipse rx="11.0" ry="6.8" fill="#843f2d"/><ellipse cx="-1.1" cy="2.4" rx="9.3" ry="3.7" fill="#5d2a1f" opacity=".45"/><path d="M-9.0 0.3 Q-4.4 1.9 0 0 T9.0 -0.3" fill="none" stroke="#efdfd4" stroke-width="1.5" stroke-linecap="round"/></g><g transform="translate(82.8 218.4) rotate(-57.0)"><ellipse rx="10.5" ry="6.0" fill="#843f2d"/><ellipse cx="-1.1" cy="2.1" rx="8.9" ry="3.3" fill="#5d2a1f" opacity=".45"/><path d="M-8.6 0.3 Q-4.2 1.7 0 0 T8.6 -0.3" fill="none" stroke="#efdfd4" stroke-width="1.5" stroke-linecap="round"/></g><g transform="translate(318.2 334.6) rotate(-29.0)"><ellipse rx="10.8" ry="6.5" fill="#843f2d"/><ellipse cx="-1.1" cy="2.3" rx="9.2" ry="3.6" fill="#5d2a1f" opacity=".45"/><path d="M-8.9 0.3 Q-4.3 1.8 0 0 T8.9 -0.3" fill="none" stroke="#efdfd4" stroke-width="1.5" stroke-linecap="round"/></g><g transform="translate(303.4 349.8) rotate(19.5)"><ellipse rx="11.0" ry="6.8" fill="#843f2d"/><ellipse cx="-1.1" cy="2.4" rx="9.3" ry="3.7" fill="#5d2a1f" opacity=".45"/><path d="M-9.0 0.3 Q-4.4 1.9 0 0 T9.0 -0.3" fill="none" stroke="#efdfd4" stroke-width="1.5" stroke-linecap="round"/></g><path d="M60.0 51.0 C59.1 51.5 55.7 52.5 54.6 54.0 C53.5 55.5 53.1 58.5 53.4 60.0 C53.7 61.5 55.3 62.7 56.4 63.0 C57.5 63.3 59.4 62.0 60.0 61.8 M64.7 56.5 C64.9 56.8 65.6 57.5 65.7 58.1 C65.8 58.7 65.7 59.6 65.5 60.1 C65.2 60.7 64.7 61.2 64.2 61.4 C63.7 61.5 63.0 61.4 62.5 61.1 C62.1 60.8 61.6 60.1 61.5 59.5 C61.4 58.9 61.5 58.0 61.7 57.5 C62.0 56.9 62.6 56.4 63.0 56.3 C63.5 56.1 64.4 56.5 64.7 56.5 M69.0 55.2 L69.6 60.0 M69.6 57.0 C70.0 56.6 71.2 54.9 72.0 54.6 C72.8 54.3 74.0 55.1 74.4 55.2 M78.6 49.2 C78.6 50.8 78.2 57.1 78.6 58.8 C79.0 60.5 80.6 59.3 81.0 59.4 M75.6 54.0 L82.8 52.8 M88.2 54.3 C88.4 54.6 89.2 55.2 89.3 55.8 C89.5 56.3 89.4 57.1 89.1 57.6 C88.8 58.1 88.2 58.6 87.6 58.7 C87.1 58.9 86.3 58.8 85.8 58.5 C85.3 58.2 84.8 57.6 84.7 57.0 C84.5 56.5 84.6 55.7 84.9 55.2 C85.2 54.7 85.8 54.2 86.4 54.1 C86.9 53.9 87.9 54.3 88.2 54.3 M89.4 54.0 C89.5 54.7 89.6 57.4 90.0 58.2 C90.4 59.0 91.5 58.7 91.8 58.8 M95.8 54.2 C96.0 54.4 96.6 55.1 96.8 55.6 C96.9 56.1 96.8 56.8 96.6 57.3 C96.3 57.8 95.8 58.2 95.3 58.4 C94.9 58.5 94.2 58.4 93.8 58.1 C93.4 57.9 93.0 57.3 92.8 56.8 C92.7 56.2 92.8 55.5 93.0 55.0 C93.3 54.6 93.8 54.1 94.3 54.0 C94.7 53.8 95.6 54.1 95.8 54.2 M97.2 47.4 L97.7 57.8 M102.5 51.7 C102.7 51.9 103.2 52.5 103.3 52.9 C103.4 53.3 103.3 54.0 103.1 54.4 C102.9 54.8 102.5 55.1 102.2 55.3 C101.8 55.4 101.3 55.3 101.0 55.1 C100.7 54.8 100.4 54.3 100.3 53.9 C100.2 53.5 100.2 52.8 100.4 52.4 C100.6 52.1 101.0 51.7 101.4 51.5 C101.7 51.4 102.3 51.7 102.5 51.7" fill="none" stroke="#1c1518" stroke-width="1.6" stroke-linecap="round" stroke-linejoin="round"/><path d="M192.4 45.6 C192.1 46.7 191.0 49.9 190.2 52.2 C189.4 54.5 187.1 58.0 187.6 59.4 C188.2 60.8 192.4 60.6 193.4 60.8 M202.2 54.6 C201.8 54.7 200.3 54.9 199.8 55.4 C199.2 56.0 198.7 57.1 198.8 57.8 C198.9 58.6 199.6 59.7 200.2 59.8 C200.9 59.8 202.1 59.0 202.6 58.2 C203.1 57.4 203.1 54.8 203.2 55.0 C203.4 55.1 203.1 58.0 203.4 59.0 C203.7 60.1 204.8 61.0 205.0 61.4 M210.4 52.4 C210.1 53.7 209.0 57.7 208.6 59.8 C208.3 61.8 208.0 63.6 208.2 64.6 C208.4 65.5 209.6 65.3 209.8 65.4 M205.0 57.4 L213.8 55.0 M216.4 54.6 C216.2 55.7 215.2 59.4 215.0 61.4 C214.8 63.4 214.7 65.6 215.0 66.6 C215.3 67.6 216.3 67.3 216.6 67.4 M209.8 59.8 L217.8 59.6 M218.2 65.0 C219.0 64.8 221.6 63.9 222.6 63.4 C223.5 62.8 224.0 62.2 224.0 61.8 C224.0 61.4 223.2 60.8 222.6 61.0 C221.9 61.2 220.6 62.1 220.0 63.0 C219.5 63.9 219.1 65.6 219.4 66.6 C219.7 67.6 220.7 68.7 221.8 69.0 C223.0 69.3 225.4 68.5 226.2 68.4" fill="none" stroke="#1c1518" stroke-width="1.6" stroke-linecap="round" stroke-linejoin="round"/><path d="M24.0 160.8 C23.2 160.9 20.0 160.0 19.2 161.4 C18.4 162.8 18.3 168.1 19.2 169.2 C20.1 170.3 23.7 168.2 24.6 168.0 M19.2 165.0 L23.4 164.4 M31.2 162.6 C30.7 162.7 28.8 162.7 28.2 163.2 C27.6 163.7 27.4 164.8 27.8 165.4 C28.2 165.9 30.2 166.0 30.6 166.6 C31.0 167.1 30.8 168.3 30.2 168.6 C29.7 168.9 27.8 168.6 27.4 168.6 M34.8 162.0 L35.8 171.6 M35.2 163.8 C35.7 163.4 37.5 161.5 38.4 161.4 C39.3 161.3 40.5 162.4 40.6 163.2 C40.7 164.0 39.8 165.6 39.0 166.2 C38.2 166.8 36.2 166.7 35.6 166.8 M43.2 161.4 L43.8 166.2 M43.8 163.2 C44.2 162.8 45.5 161.1 46.2 160.8 C46.9 160.5 47.7 161.3 48.0 161.4 M49.2 163.8 C49.8 163.6 52.3 163.2 52.8 162.6 C53.3 162.0 52.7 160.4 52.2 160.2 C51.7 160.0 50.3 160.6 49.8 161.4 C49.3 162.2 49.1 164.2 49.4 165.0 C49.7 165.8 50.8 166.1 51.6 166.2 C52.4 166.3 53.6 165.5 54.0 165.4 M58.8 159.0 C58.4 159.1 56.8 159.2 56.4 159.6 C56.0 160.0 55.8 160.9 56.2 161.4 C56.5 161.9 58.2 162.1 58.6 162.6 C58.9 163.1 58.7 164.3 58.2 164.6 C57.7 165.0 55.9 164.6 55.4 164.6 M63.6 158.4 C63.2 158.5 61.6 158.6 61.2 159.0 C60.8 159.4 60.6 160.3 61.0 160.8 C61.3 161.3 63.0 161.5 63.4 162.0 C63.7 162.5 63.5 163.5 63.0 163.8 C62.5 164.1 60.8 163.8 60.4 163.8 M67.4 158.4 C67.6 158.6 68.1 159.2 68.2 159.7 C68.3 160.1 68.3 160.8 68.1 161.2 C67.9 161.6 67.4 162.0 67.0 162.2 C66.7 162.3 66.1 162.2 65.8 162.0 C65.4 161.7 65.1 161.2 65.0 160.7 C64.9 160.3 64.9 159.6 65.1 159.2 C65.3 158.8 65.8 158.4 66.2 158.2 C66.6 158.1 67.2 158.4 67.4 158.4" fill="none" stroke="#1c1518" stroke-width="1.6" stroke-linecap="round" stroke-linejoin="round"/><path d="M246.8 138.0 L246.0 149.4 M246.8 138.0 L254.0 136.2 M246.2 143.4 L252.2 142.2 M258.2 136.8 C258.2 138.8 257.7 146.8 258.0 148.8 C258.3 150.8 259.7 149.0 260.0 149.0 M266.0 143.7 C266.2 144.0 267.0 144.6 267.1 145.2 C267.3 145.7 267.2 146.5 266.9 147.0 C266.6 147.5 266.0 148.0 265.4 148.1 C264.9 148.3 264.1 148.2 263.6 147.9 C263.1 147.6 262.6 147.0 262.5 146.4 C262.3 145.9 262.4 145.1 262.7 144.6 C263.0 144.1 263.6 143.6 264.2 143.5 C264.7 143.3 265.7 143.7 266.0 143.7 M267.2 143.4 C267.3 144.2 267.4 147.3 267.8 148.2 C268.2 149.1 269.3 148.7 269.6 148.8 M273.2 138.0 C273.3 139.7 273.3 146.4 273.8 148.2 C274.3 150.0 275.8 148.7 276.2 148.8 M269.6 143.4 L278.0 142.2 M243.2 157.2 C243.5 158.7 244.2 165.7 245.0 166.2 C245.8 166.7 247.0 160.2 248.0 160.2 C249.0 160.2 250.1 166.8 251.0 166.2 C251.9 165.6 253.0 158.2 253.4 156.6 M257.0 155.4 L257.6 166.2 M257.6 162.0 C258.1 161.6 259.7 159.7 260.6 159.6 C261.5 159.5 262.5 160.2 263.0 161.4 C263.5 162.6 263.5 165.9 263.6 166.8 M267.8 160.8 L268.2 166.6 M267.4 157.3 L267.7 157.6 M272.6 156.0 C272.7 157.7 272.7 164.4 273.2 166.2 C273.7 168.0 275.2 166.7 275.6 166.8 M269.6 160.8 L276.8 160.2 M278.0 163.8 C278.7 163.6 281.6 163.3 282.2 162.6 C282.8 161.9 282.1 160.0 281.6 159.6 C281.1 159.2 279.7 159.4 279.2 160.2 C278.7 161.0 278.1 163.3 278.4 164.4 C278.7 165.5 280.0 166.8 281.0 167.0 C282.0 167.2 284.0 165.8 284.6 165.6" fill="none" stroke="#1c1518" stroke-width="1.6" stroke-linecap="round" stroke-linejoin="round"/><path d="M61.2 264.8 C61.4 263.2 61.5 255.6 62.4 255.2 C63.3 254.8 65.2 262.5 66.6 262.4 C68.0 262.3 69.9 254.3 70.8 254.6 C71.7 254.9 71.8 262.6 72.0 264.2 M78.0 258.3 C78.2 258.6 79.0 259.3 79.1 259.9 C79.3 260.5 79.2 261.4 78.9 261.9 C78.6 262.5 78.0 263.0 77.4 263.2 C76.9 263.3 76.1 263.2 75.6 262.9 C75.1 262.6 74.6 261.9 74.5 261.3 C74.3 260.7 74.4 259.8 74.7 259.3 C75.0 258.7 75.6 258.2 76.2 258.1 C76.7 257.9 77.7 258.3 78.0 258.3 M85.8 258.2 C85.3 258.2 83.5 257.7 82.8 258.2 C82.1 258.7 81.3 260.3 81.4 261.2 C81.4 262.1 82.2 263.3 83.0 263.6 C83.9 263.9 85.8 263.1 86.4 263.0 M88.8 254.0 L89.4 264.2 M89.4 260.0 C89.9 259.7 91.5 258.3 92.4 258.2 C93.3 258.1 94.1 258.4 94.6 259.4 C95.0 260.4 95.0 263.4 95.0 264.2 M100.0 259.3 C100.2 259.5 100.9 260.2 101.0 260.6 C101.1 261.1 101.0 261.8 100.8 262.3 C100.5 262.7 100.0 263.2 99.5 263.3 C99.1 263.4 98.4 263.3 98.0 263.1 C97.6 262.8 97.2 262.3 97.0 261.8 C96.9 261.3 97.0 260.6 97.2 260.1 C97.5 259.7 98.0 259.2 98.5 259.1 C98.9 259.0 99.8 259.3 100.0 259.3 M101.0 259.0 C101.1 259.8 101.0 262.7 101.4 263.6 C101.8 264.5 102.9 264.4 103.2 264.6" fill="none" stroke="#1c1518" stroke-width="1.8" stroke-linecap="round" stroke-linejoin="round"/><path d="M287.2 300.8 C287.7 300.0 289.0 297.7 290.0 296.0 C290.9 294.3 292.5 290.5 293.0 290.7 C293.5 291.0 293.2 295.3 293.2 297.6 C293.3 299.9 293.3 303.2 293.3 304.3 M289.4 299.0 L294.8 297.4 M298.0 298.5 L297.6 303.5 M298.1 300.6 C298.6 300.3 300.4 298.8 301.0 298.9 C301.6 299.0 301.4 300.4 301.5 301.2 C301.5 302.0 301.3 303.5 301.3 303.9 M301.6 300.6 C302.0 300.3 303.8 298.3 304.4 298.5 C304.9 298.6 304.8 300.6 304.9 301.6 C305.0 302.6 305.0 304.1 305.0 304.6 M307.8 302.5 C308.5 302.2 311.2 301.4 311.7 300.9 C312.3 300.4 311.5 299.7 311.1 299.6 C310.6 299.5 309.5 299.7 308.9 300.2 C308.4 300.7 307.7 301.8 307.8 302.6 C307.9 303.5 308.5 304.8 309.3 305.1 C310.2 305.4 312.3 304.6 312.8 304.5 M315.4 300.0 L316.0 305.6 M316.0 302.2 C316.4 301.9 317.3 300.5 318.0 300.1 C318.6 299.6 319.6 299.7 320.0 299.6 M322.4 300.9 L322.8 305.4 M322.9 297.5 L323.1 297.8 M330.6 300.3 C330.1 300.5 328.0 300.6 327.3 301.1 C326.6 301.6 326.4 302.7 326.4 303.4 C326.5 304.2 326.9 305.2 327.7 305.6 C328.5 306.0 330.7 305.7 331.2 305.8 M337.1 301.3 C337.3 301.5 338.0 302.1 338.1 302.6 C338.3 303.1 338.2 303.8 337.9 304.3 C337.7 304.7 337.1 305.2 336.6 305.3 C336.1 305.4 335.4 305.3 335.0 305.1 C334.5 304.8 334.1 304.3 334.0 303.8 C333.8 303.3 333.9 302.6 334.2 302.1 C334.4 301.7 335.0 301.2 335.5 301.1 C336.0 301.0 336.8 301.3 337.1 301.3 M338.1 301.1 C338.2 301.8 338.1 304.2 338.4 305.0 C338.8 305.7 339.8 305.4 340.0 305.4 M342.0 300.0 L342.4 304.5 M342.4 301.8 C342.8 301.4 344.1 299.8 344.8 299.5 C345.6 299.3 346.5 299.5 347.1 300.3 C347.6 301.1 347.9 303.8 348.0 304.5 M353.1 300.0 C353.3 300.2 353.9 300.7 354.0 301.2 C354.1 301.7 354.0 302.4 353.8 302.8 C353.6 303.2 353.1 303.6 352.7 303.8 C352.3 303.9 351.7 303.8 351.3 303.6 C350.9 303.3 350.5 302.8 350.4 302.3 C350.3 301.8 350.4 301.1 350.6 300.7 C350.8 300.3 351.3 299.9 351.7 299.8 C352.1 299.6 352.9 299.9 353.1 300.0" fill="none" stroke="#1c1518" stroke-width="1.75" stroke-linecap="round" stroke-linejoin="round"/></g><clipPath id="tc"><rect x="0" y="0" width="341" height="341"/></clipPath><g id="tile" clip-path="url(#tc)"><rect width="341" height="341" fill="#fff"/><use href="#art"/><use href="#art" x="-341"/><use href="#art" y="-341"/><use href="#art" x="-341" y="-341"/></g><clipPath id="cv"><rect x="339" y="176" width="681" height="681"/></clipPath><filter id="sh" x="-5%" y="-5%" width="110%" height="110%"><feGaussianBlur stdDeviation="2.2"/></filter></defs><rect x="338" y="175" width="683" height="683" fill="#000" opacity=".55" filter="url(#sh)"/><g clip-path="url(#cv)"><rect x="339" y="176" width="681" height="681" fill="#fff"/><g transform="translate(339 176) scale(1.997)"><use href="#tile"/></g><g transform="translate(339 176) scale(.9985)"><use href="#tile"/></g><g transform="translate(679.5 176) scale(.9985)"><use href="#tile"/></g><g transform="translate(339 516.5) scale(.9985)"><use href="#tile"/></g></g>
<defs>
<linearGradient id="gv" x1="0" y1="109" x2="0" y2="925" gradientUnits="userSpaceOnUse">
<stop offset="0" stop-color="#eea335" stop-opacity="0"/><stop offset=".06" stop-color="#eea335" stop-opacity=".75"/><stop offset=".1" stop-color="#eea335"/>
<stop offset=".9" stop-color="#eea335"/><stop offset=".94" stop-color="#eea335" stop-opacity=".75"/><stop offset="1" stop-color="#eea335" stop-opacity="0"/></linearGradient>
<linearGradient id="gh" x1="271" y1="0" x2="1087" y2="0" gradientUnits="userSpaceOnUse">
<stop offset="0" stop-color="#eea335" stop-opacity="0"/><stop offset=".06" stop-color="#eea335" stop-opacity=".75"/><stop offset=".1" stop-color="#eea335"/>
<stop offset=".9" stop-color="#eea335"/><stop offset=".94" stop-color="#eea335" stop-opacity=".75"/><stop offset="1" stop-color="#eea335" stop-opacity="0"/></linearGradient>
<linearGradient id="gd" x1="292" y1="902" x2="720" y2="476" gradientUnits="userSpaceOnUse">
<stop offset="0" stop-color="#1f8ae6" stop-opacity="0"/><stop offset=".1" stop-color="#1f8ae6"/><stop offset=".9" stop-color="#2a92ea"/><stop offset="1" stop-color="#7cc0f2" stop-opacity="0"/></linearGradient>
<g id="hd"><circle r="7.6" fill="#000" opacity=".12"/><circle r="7" fill="#fff"/><circle r="4.9" fill="#1877e6"/></g>
</defs>
<!-- marching ants -->
<path d="M338 517 V858.4 H679.2 V517 Z" fill="none" stroke="#111" stroke-width="2"/>
<path d="M338 517 V858.4 H679.2 V517 Z" fill="none" stroke="#fff" stroke-width="2" stroke-dasharray="6.9 6.9" stroke-dashoffset="2"/>
<!-- rotate / aux handles -->
<path d="M508.5 476 V511" stroke="#22c322" stroke-width="1.8"/>
<circle cx="508.5" cy="469" r="7" fill="#fff" opacity=".9"/><circle cx="508.5" cy="469" r="4.9" fill="#1fd420"/>
<path d="M508.5 864 V899" stroke="#c99d1f" stroke-width="1.8"/>
<rect x="501.9" y="898.4" width="13.2" height="13.2" rx="2.6" fill="#fff"/><rect x="503.5" y="900" width="10" height="10" rx="1.2" fill="#f6b400"/>
<!-- handles -->
<use href="#hd" x="338" y="517"/><use href="#hd" x="508.5" y="517"/><use href="#hd" x="338" y="687"/><use href="#hd" x="679" y="687"/>
<use href="#hd" x="508.5" y="858"/><use href="#hd" x="679" y="858"/>
<!-- guides -->
<path d="M292 902 L720 476" stroke="url(#gd)" stroke-width="1.7" fill="none"/>
<rect x="678" y="109" width="2.1" height="816" fill="url(#gv)" opacity=".86"/>
<rect x="271" y="515.9" width="816" height="2.1" fill="url(#gh)" opacity=".86"/>
<use href="#hd" x="338" y="858"/>
<circle cx="679" cy="517" r="4.9" fill="#1877e6"/>

</svg>
<div id="tip"><b style="top:10.5px">Width</b><b style="top:33px">Height</b><i style="top:10.5px">1000px</i><i style="top:33px">1000px</i></div>
<div id="topbar"><div class="gal">Gallery</div>
<svg width="1500" height="60" viewBox="0 0 1500 60">
<g fill="#181818"><circle cx="157" cy="30.5" r="21.5"/><circle cx="237" cy="30.5" r="21.5"/><circle cx="318" cy="30.5" r="21.5"/></g>
<!-- wrench -->
<g fill="#a8a8a8" stroke="none">
<path d="M147.4 40.9 L158.6 28.6" stroke="#a8a8a8" stroke-width="5" stroke-linecap="round" fill="none"/>
<circle cx="161.6" cy="25.8" r="7.4"/>
<path d="M161.2 26.2 L165.2 14 L173 21.5 Z M161 26.4 l5.6 -13 l8 8 z" fill="#181818"/>
<rect x="-2.7" y="-11" width="5.4" height="11.5" transform="translate(161.9 25.5) rotate(42)" fill="#181818"/>
</g>
<!-- wand -->
<g fill="#a8a8a8">
<path d="M230.9 40.6 L246 25.6" stroke="#a8a8a8" stroke-width="4.2" stroke-linecap="round" fill="none"/>
<path d="M238.6 28.2 L243.2 32.8" stroke="#181818" stroke-width="1.1" fill="none"/>
<path d="M233 19.3 Q233.4 24.6 238.8 25 Q233.4 25.4 233 30.7 Q232.6 25.4 227.2 25 Q232.6 24.6 233 19.3Z"/>
<path d="M240.5 18.3 Q240.7 21.3 243.7 21.5 Q240.7 21.7 240.5 24.7 Q240.3 21.7 237.3 21.5 Q240.3 21.3 240.5 18.3Z"/>
</g>
<!-- selection S -->
<g fill="#a8a8a8">
<path d="M316.2 19.9 H327.4 Q329.4 19.9 328.7 21.8 Q328 23.6 326 23.6 H314.8 Q315 21 316.2 19.9Z"/>
<path d="M313.6 25.8 H318.2 L321.4 37 H316.8 Z"/>
<path d="M309 37.9 H320.6 Q320.6 40.4 319 41.3 H307.8 Q306.4 41.3 307.2 39.6 Q308 37.9 309 37.9Z"/>
</g>
<!-- arrow (active) -->
<circle cx="398.5" cy="30.5" r="22.5" fill="#1583f7"/>
<path d="M409.2 19.8 L390.2 28.6 L397.3 31.2 L388.2 40.4 Q387.4 41.8 388.8 42.2 Q389.6 42.2 390.2 41.6 L399 32.8 L401.2 38.8 Z" fill="#fff"/>
<path d="M469.3 28.0 C468.5 28.1 465.5 28.2 464.5 28.9 C463.5 29.5 462.7 30.8 463.2 31.9 C463.8 33.0 466.8 34.1 468.0 35.4 C469.2 36.6 470.2 38.2 470.2 39.3 C470.2 40.3 469.2 41.6 468.0 41.9 C466.8 42.2 463.7 41.1 462.8 41.0 M481.0 32.3 C480.3 32.3 478.1 31.3 477.1 31.9 C476.1 32.5 475.1 34.6 474.9 35.8 C474.8 37.0 475.4 38.5 476.2 38.8 C477.1 39.1 479.3 38.5 480.1 37.5 C481.0 36.5 481.1 32.8 481.4 32.8 C481.7 32.8 481.3 36.2 481.9 37.5 C482.4 38.9 484.4 40.4 484.9 41.0 M488.4 32.3 C489.0 33.6 490.7 39.9 492.3 39.7 C493.8 39.5 496.6 32.5 497.5 31.0 M507.9 33.6 C507.3 33.6 505.3 32.6 504.4 33.2 C503.5 33.8 502.4 35.9 502.2 37.1 C502.0 38.3 502.3 40.3 503.1 40.6 C503.9 40.9 506.1 39.9 507.0 38.8 C507.9 37.7 508.3 34.0 508.7 34.1 C509.2 34.1 508.9 38.2 509.6 39.3 C510.2 40.3 512.1 40.3 512.6 40.6 M517.0 33.6 L517.4 40.1 M517.4 36.7 C518.0 36.2 519.8 34.0 520.9 33.6 C521.9 33.3 523.2 33.4 523.9 34.5 C524.5 35.6 524.6 39.2 524.8 40.1 M530.4 33.2 L531.3 40.1 M531.3 36.2 C531.8 35.7 533.6 33.6 534.7 33.2 C535.8 32.8 537.1 33.0 537.8 34.1 C538.4 35.1 538.5 38.8 538.6 39.7 M549.9 31.9 C549.2 32.0 546.9 31.7 546.0 32.3 C545.0 33.0 544.3 34.8 544.3 35.8 C544.2 36.8 544.7 38.3 545.6 38.4 C546.4 38.5 548.6 37.7 549.5 36.7 C550.3 35.7 550.5 32.3 550.8 32.3 C551.0 32.3 550.8 35.8 551.2 36.7 C551.6 37.5 553.0 37.4 553.4 37.5 M558.1 23.7 L558.6 38.4 M558.6 34.9 C559.1 34.5 561.0 32.5 562.0 32.3 C563.0 32.2 563.9 32.6 564.6 34.1 C565.3 35.5 566.1 39.8 566.4 41.0 M571.6 34.5 L579.8 34.5 M591.0 27.6 C590.2 27.7 587.3 27.8 586.3 28.4 C585.3 29.1 584.5 30.5 585.0 31.5 C585.4 32.5 587.9 33.4 588.9 34.5 C589.8 35.6 590.6 37.0 590.6 38.0 C590.6 39.0 590.0 40.2 588.9 40.6 C587.7 40.9 584.5 40.2 583.7 40.1 M598.0 25.0 C598.0 27.5 597.9 37.5 598.4 40.1 C598.9 42.7 600.6 40.5 601.0 40.6 M593.6 32.8 L603.6 31.9 M612.0 32.4 C612.3 32.7 613.1 33.5 613.3 34.2 C613.5 34.9 613.6 35.9 613.5 36.6 C613.4 37.4 613.0 38.2 612.6 38.7 C612.1 39.2 611.4 39.6 610.8 39.7 C610.3 39.8 609.5 39.6 609.0 39.2 C608.5 38.8 608.0 38.1 607.8 37.4 C607.5 36.7 607.4 35.7 607.6 35.0 C607.7 34.2 608.1 33.4 608.5 32.9 C608.9 32.4 609.6 32.0 610.2 31.9 C610.8 31.8 611.7 32.3 612.0 32.4 M618.3 31.9 L618.8 39.7 M618.8 34.9 C619.3 34.4 620.9 32.3 621.8 31.9 C622.7 31.5 624.0 32.3 624.4 32.3 M629.2 31.9 L629.6 39.7 M629.6 34.9 C630.0 34.4 631.3 32.3 632.2 31.9 C633.1 31.5 634.3 31.6 634.8 32.8 C635.3 33.9 635.2 37.8 635.2 38.8 M635.2 34.5 C635.7 34.1 637.3 32.1 638.3 31.9 C639.2 31.7 640.2 31.7 640.9 33.2 C641.5 34.7 641.9 39.7 642.2 41.0 M648.5 38.2 L648.9 38.6 M661.7 31.9 C660.9 31.9 658.3 31.2 657.3 31.9 C656.3 32.5 655.6 34.6 655.6 35.8 C655.6 37.0 656.2 38.4 657.3 38.8 C658.4 39.3 661.3 38.5 662.1 38.4 M671.6 31.9 C671.9 32.2 672.8 32.9 673.1 33.5 C673.3 34.1 673.4 35.0 673.3 35.7 C673.1 36.3 672.7 37.1 672.2 37.5 C671.7 38.0 670.9 38.3 670.2 38.4 C669.6 38.4 668.7 38.3 668.2 37.9 C667.6 37.6 667.0 37.0 666.7 36.3 C666.4 35.7 666.4 34.9 666.5 34.2 C666.6 33.5 667.1 32.8 667.6 32.4 C668.1 31.9 668.8 31.6 669.5 31.5 C670.2 31.4 671.3 31.9 671.6 31.9 M678.6 31.0 L679.4 38.4 M679.4 33.6 C679.9 33.1 681.5 30.9 682.5 30.6 C683.4 30.3 684.5 30.7 685.1 31.9 C685.6 33.1 685.8 36.6 685.9 37.5 M685.9 33.2 C686.5 32.6 688.2 30.1 689.4 29.7 C690.5 29.4 691.7 29.7 692.9 31.0 C694.0 32.4 695.7 36.8 696.3 38.0" fill="none" stroke="#fff" stroke-width="2.2" stroke-linecap="round" stroke-linejoin="round"/>
<!-- brush -->
<g fill="#cccccc">
<path d="M1097.4 13 Q1098.6 13.6 1096.8 16.4 Q1088 29.4 1074.4 36.6 Q1072.6 36.4 1072.6 35 Q1082.6 21 1097.4 13Z"/>
<path d="M1072.8 37.2 Q1075.4 40.4 1070.6 44.6 Q1065.4 48.4 1058.4 47.4 Q1057.6 46.6 1058.6 46 Q1062 44.6 1063 41.6 Q1065.4 36.2 1072.8 37.2Z"/>
</g>
<!-- smudge -->
<path fill="#cccccc" d="M1183.6 12.6 L1192 20.6 L1189.2 23.6 Q1187 26.6 1185.4 32 Q1184 37.6 1179.4 41.8 Q1176.6 43.6 1174.8 41.6 L1181.6 33.6 L1179.6 33.8 L1166 47.4 Q1162.4 49.6 1159.4 47 Q1157 44.4 1159.4 40.4 L1163.8 33.2 Q1161.6 27.6 1163.6 23 Q1166.4 18.6 1172.4 17.8 L1178.6 17.4 Z"/>
<!-- eraser -->
<g transform="translate(1272.4 30.4) rotate(-43)">
<path fill="#cccccc" d="M-18.4 -5 Q-18.4 -7.8 -15.6 -7.8 H14 Q18.6 -7.8 18.6 -3.2 V3.2 Q18.6 7.8 14 7.8 H-15.6 Q-18.4 7.8 -18.4 5 Z"/>
<rect x="-10.4" y="-8.5" width="1.5" height="17" fill="#1e1e1e"/>
</g>
<!-- layers -->
<rect x="1361" y="13.5" width="25.4" height="25.3" rx="4.2" fill="#cccccc"/>
<rect x="1351.6" y="20.4" width="27.6" height="28" rx="5.4" fill="#1e1e1e"/>
<rect x="1352.8" y="21.6" width="25.2" height="25.6" rx="4.2" fill="#cccccc"/>
<!-- color -->
<circle cx="1466.7" cy="30.6" r="20.8" fill="#0e0e0e" stroke="#7c7c7c" stroke-width="1.6"/>
</svg></div>
<div id="panel">
<div id="seg"><div class="on"></div>
<span style="left:67px;letter-spacing:.5px">Freeform</span><span class="w" style="left:251px;letter-spacing:.7px">Uniform</span><span style="left:427.5px;letter-spacing:.75px">Distort</span><span style="left:593.5px">Warp</span></div>
<div class="lbl" style="left:-4.4px">Snapping</div>
<div class="lbl" style="left:145.6px">Flip Horizontal</div>
<div class="lbl" style="left:295.5px">Flip Vertical</div>
<div class="lbl" style="left:445.5px">Rotate 45&deg;</div>
<div class="lbl" style="left:595.5px">Fit to Screen</div>
<div class="lbl" style="left:745.5px">Bilinear</div>
<div class="lbl" style="left:895.5px">Reset</div>
<svg id="picons" width="1500" height="1125" viewBox="0 0 1500 1125">
<!-- segment icons -->
<g fill="none" stroke="#c8c8c8" stroke-width="2">
<rect x="447.5" y="980" width="21.6" height="18.4" rx="3"/>
<rect x="808" y="980.2" width="21.4" height="18.4" rx="3"/>
<rect x="974" y="980" width="24.6" height="18.4" rx="4.5"/>
</g>
<path d="M447.5 984 H457.8 V998.4 H450.5 Q447.5 998.4 447.5 995.4Z" fill="#c8c8c8"/>
<path d="M808 982 Q826.5 983 827.6 998.6 H811 Q808 998.6 808 995.6Z" fill="#c8c8c8"/>
<path d="M975.6 981 H994 Q998.6 981 998.6 985 V993.4 Q998.6 998.4 994 998.4 H975.6 Q983.6 989.6 975.6 981Z" fill="#c8c8c8"/>
<rect x="632.3" y="980" width="21.6" height="18.4" rx="3" fill="none" stroke="#fff" stroke-width="2"/>
<path d="M632.3 984 H647.6 Q650.4 984 650.4 986.8 V998.4 H635.3 Q632.3 998.4 632.3 995.4Z" fill="#fff"/>
<!-- snapping -->
<circle cx="299.6" cy="1054.6" r="12.6" fill="#1583f7"/>
<path d="M303.6 1041.6 L292.2 1056 L298.4 1056 L295.2 1067.8 L307 1052.8 L300.6 1052.8 Z" fill="#1e1e1e"/>
<g fill="#b0b0b0" stroke="none">
<!-- flip h -->
<path d="M436.6 1046.6 L441.4 1043.6 V1045.9 H457.6 V1043.6 L462.4 1046.6 L457.6 1049.6 V1047.3 H441.4 V1049.6 Z"/>
<path d="M447.9 1052.6 V1067.4 H435.8 Z M451 1052.6 V1067.4 H463.1 Z"/>
<!-- flip v -->
<path d="M586 1041.3 V1054 H601.6 Z M586 1056.9 H601.6 L586 1069.8 Z"/>
<path d="M608 1042.4 L611 1047.6 H608.8 V1063.8 H611 L608 1069 L605 1063.8 H607.2 V1047.6 H605 Z"/>
<!-- rotate -->
<rect x="740" y="1050.8" width="18.4" height="17.3" rx="2.6"/>
<path d="M735 1052.6 Q735.4 1046.6 741.4 1044.2" fill="none" stroke="#b0b0b0" stroke-width="1.8" stroke-linecap="round"/>
<path d="M740.2 1040.8 L746.2 1043.4 L741.8 1047.6 Z"/>
<!-- fit -->
<rect x="890" y="1045.6" width="20.2" height="20.2" rx="1.8"/>
<!-- bilinear -->
<circle cx="1049.6" cy="1054.7" r="12.7"/>
</g>
<g fill="#1e1e1e">
<path d="M894.4 1061.6 L905.8 1050" stroke="#1e1e1e" stroke-width="1.5" fill="none"/>
<path d="M907.6 1048.2 L907 1053.4 L902.4 1048.8 Z M892.6 1063.4 L893.2 1058.2 L897.8 1062.8 Z"/>
<clipPath id="bc"><circle cx="1049.6" cy="1054.7" r="11.4"/></clipPath>
<g clip-path="url(#bc)">
<rect x="1042" y="1045" width="4" height="4"/><rect x="1038" y="1049" width="4" height="4"/><rect x="1046" y="1049" width="4" height="4"/>
<rect x="1042" y="1053" width="4" height="4"/><rect x="1050" y="1053" width="4" height="4"/>
<rect x="1038" y="1057" width="4" height="4"/><rect x="1046" y="1057" width="4" height="4"/><rect x="1042" y="1061" width="4" height="4"/>
</g></g>
<!-- reset -->
<g fill="none" stroke="#b0b0b0" stroke-width="4.2">
<path d="M1189.9 1054 V1052 Q1189.9 1048 1193.9 1048 H1206"/>
<path d="M1207.5 1057.8 V1060 Q1207.5 1064 1203.5 1064 H1191.6"/>
</g>
<path d="M1205 1042.6 L1212.4 1048 L1205 1053.4 Z M1192.4 1058.6 L1185 1064 L1192.4 1069.4 Z" fill="#b0b0b0"/>
</svg>
</div>
</div></body></html>
